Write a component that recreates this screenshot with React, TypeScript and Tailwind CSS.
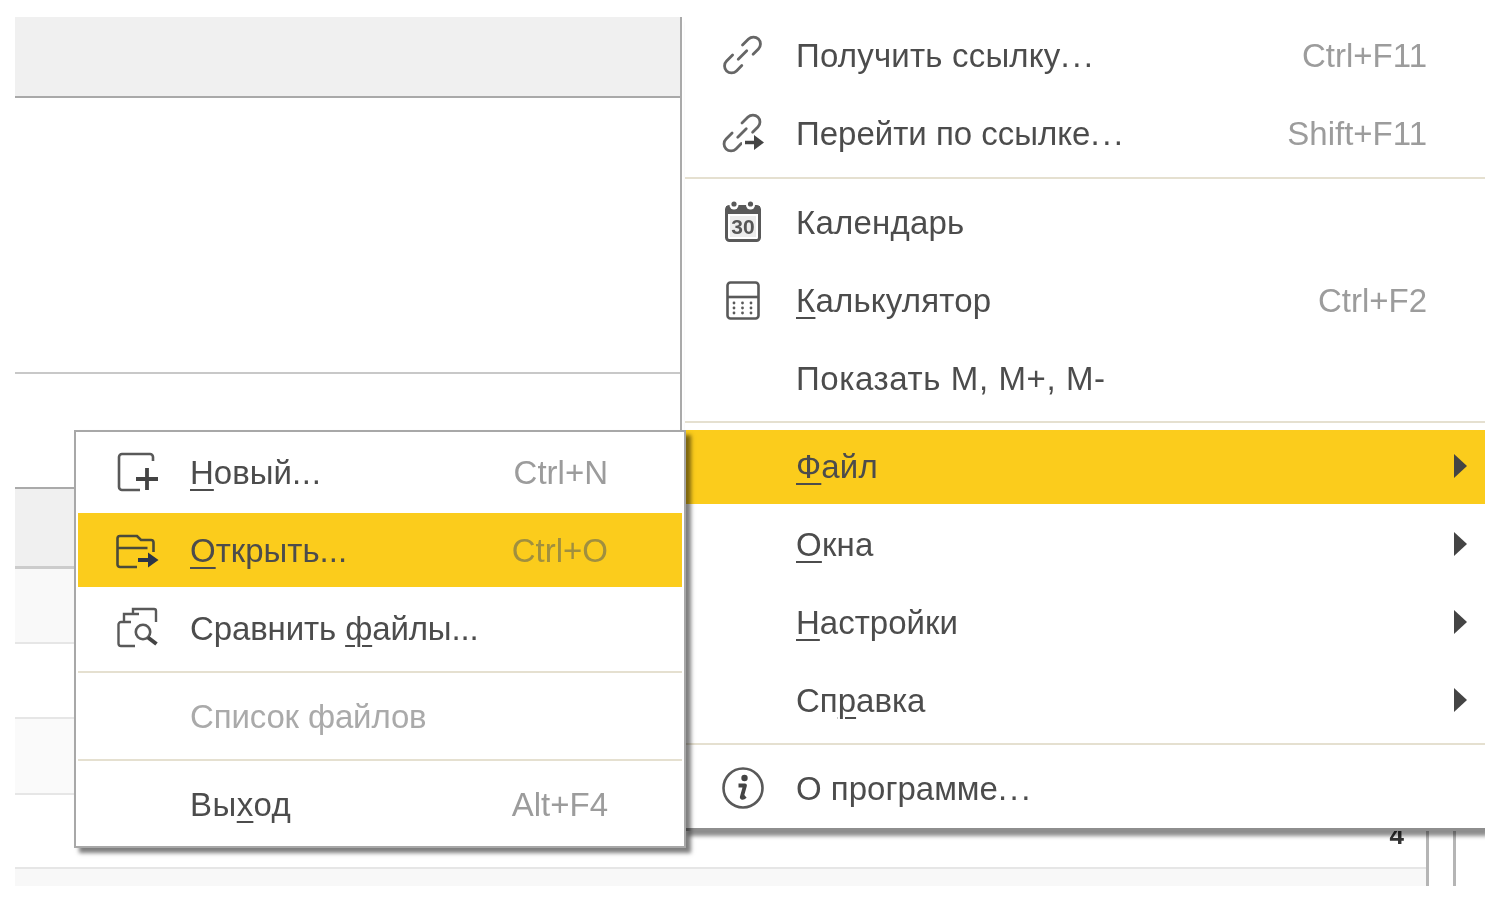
import React from 'react';

const iconClass = 'w-[44px] h-[44px] shrink-0 text-[#595959]';

function LinkGlyph() {
  return (
    <g transform="rotate(-45 20 23)" fill="none" stroke="#666666" strokeWidth="2.8" strokeLinecap="round">
      <path d="M13 16H4.500a7 7 0 0 0 0 14H12" />
      <path d="M27 16h8.500a7 7 0 0 1 0 14H28" />
      <path d="M14 23h12" />
    </g>
  );
}

const LinkIcon = () => (
  <svg viewBox="0 0 44 44" className={iconClass}>
    <g transform="translate(1.500 -1)">
      <LinkGlyph />
    </g>
  </svg>
);

const FollowLinkIcon = () => (
  <svg viewBox="0 0 44 44" className={iconClass}>
    <g transform="translate(1 -1)">
      <LinkGlyph />
    </g>
    <rect x="21" y="26" width="22" height="18" fill="#fff" />
    <path d="M24 31.500h11" stroke="#444" strokeWidth="3.500" fill="none" />
    <path d="M33 24l10 7.500-10 7.500z" fill="#444" />
  </svg>
);

const CalendarIcon = () => (
  <svg viewBox="0 0 44 44" className={iconClass}>
    <rect x="5.500" y="6.500" width="33" height="34" rx="3" fill="none" stroke="currentColor" strokeWidth="3" />
    <rect x="5" y="6" width="34" height="8" fill="currentColor" />
    <circle cx="13" cy="5" r="4.500" fill="#fff" />
    <circle cx="29.500" cy="5" r="4.500" fill="#fff" />
    <circle cx="13" cy="4" r="2.600" fill="currentColor" />
    <circle cx="29.500" cy="4" r="2.600" fill="currentColor" />
    <rect x="9" y="16" width="26" height="21" fill="#ececec" />
    <text x="22" y="34" textAnchor="middle" fontFamily="'Liberation Sans', sans-serif" fontWeight="700" fontSize="21" fill="#555">
      30
    </text>
  </svg>
);

const CalculatorIcon = () => (
  <svg viewBox="0 0 44 44" className={iconClass}>
    <rect x="6.500" y="4.500" width="31" height="36" rx="3" fill="none" stroke="currentColor" strokeWidth="2.600" />
    <path d="M6.500 19h31" stroke="currentColor" strokeWidth="2.600" />
    {[13, 21.5, 30].flatMap((x) =>
      [25, 30, 35].map((y) => <circle key={`${x}-${y}`} cx={x} cy={y} r="1.400" fill="currentColor" />)
    )}
  </svg>
);

const InfoIcon = () => (
  <svg viewBox="0 0 44 44" className={iconClass}>
    <circle cx="22" cy="22" r="19.500" fill="none" stroke="currentColor" strokeWidth="2.600" />
    <circle cx="23.500" cy="12" r="3.200" fill="#444" />
    <path d="M17.500 19.500h6.500l-3.200 11.500c-.3 1.200 1 1.400 3.600-.8" fill="none" stroke="#444" strokeWidth="3.800" strokeLinejoin="round" />
  </svg>
);

const NewIcon = () => (
  <svg viewBox="0 0 44 44" className={iconClass}>
    <path d="M24 40H6a3 3 0 0 1-3-3V7a3 3 0 0 1 3-3h28a3 3 0 0 1 3 3v4" fill="none" stroke="currentColor" strokeWidth="2.600" />
    <path d="M31 18v22M20 29h22" stroke="#444" strokeWidth="3.800" fill="none" />
  </svg>
);

const OpenIcon = () => (
  <svg viewBox="0 0 44 44" className={iconClass}>
    <path
      d="M21 39H4a2.500 2.500 0 0 1-2.500-2.500V10.500A2.500 2.500 0 0 1 4 8h17l4 4h10a2.500 2.500 0 0 1 2.500 2.500V24M1.500 20h30"
      fill="none"
      stroke="#4a4a3a"
      strokeWidth="2.600"
    />
    <path d="M22 32h12" stroke="#2c3548" strokeWidth="4" fill="none" />
    <path d="M32 24.500l10.500 7.500-10.500 7.500z" fill="#2c3548" />
  </svg>
);

const CompareIcon = () => (
  <svg viewBox="0 0 44 44" className={iconClass}>
    <path
      d="M19 40H5a2.500 2.500 0 0 1-2.500-2.500V18.500A2.500 2.500 0 0 1 5 16h3V8h9V3h21a2 2 0 0 1 2 2v11M17 8h6M8 16h7"
      fill="none"
      stroke="currentColor"
      strokeWidth="2.400"
    />
    <circle cx="27" cy="26" r="7.200" fill="#fff" stroke="currentColor" strokeWidth="2.600" />
    <path d="M32 31.500l8.500 6.500" stroke="#444" strokeWidth="4" />
  </svg>
);

interface MenuRowProps {
  icon?: React.ReactNode;
  shortcut?: string;
  hasArrow?: boolean;
  active?: boolean;
  disabled?: boolean;
  wide?: boolean;
  children: React.ReactNode;
}

const Key = ({ children }: { children: React.ReactNode }) => (
  <span className="underline decoration-[2px] underline-offset-[5px]">{children}</span>
);

// the dots are spaced wider than the font sets them
const Dots = () => <span className="tracking-[2.500px]">...</span>;

const MenuRow: React.FC<MenuRowProps> = ({ icon, shortcut, hasArrow, active, disabled, wide, children }) => (
  <div className={`h-[78px] ${active && wide ? 'pt-[3px] pb-[1px]' : 'py-[2px]'}`}>
    <div
      className={`h-[74px] flex items-center ${active ? 'bg-[#fbcc1c]' : ''} ${active && wide ? 'pb-[2px]' : ''} ${wide ? 'pl-[36px]' : 'pl-[38px]'}`}
    >
      <div className={`shrink-0 ${wide ? 'w-[75px]' : 'w-[74px]'}`}>{icon}</div>
      <div className={`flex-1 whitespace-nowrap ${disabled ? 'text-[#aaaaaa]' : 'text-[#4c4c4c]'}`}>
        {children}
      </div>
      {shortcut && (
        <div className={`whitespace-nowrap ${active ? 'text-[#a08f3f]' : 'text-[#9c9c9c]'}`}>{shortcut}</div>
      )}
      {wide && (
        <div className="w-[58px] shrink-0 flex justify-end pr-[18px]">
          {hasArrow && <div className="w-0 h-0 border-y-[12px] border-y-transparent border-l-[13px] border-l-[#444444]" />}
        </div>
      )}
      {!wide && <div className="w-[74px] shrink-0" />}
    </div>
  </div>
);

const Separator = () => <div className="h-[2px] my-[4px] bg-[#e5e0d0]" />;

const RightMenu = () => (
  <div className="absolute left-[670px] top-0 w-[800px] bg-white border-b-[3px] border-[#8e8e8e] shadow-[3px_5px_4px_rgba(0,0,0,0.45)] pb-[1px]">
    <div className="-mt-[1px] mb-[5px]">
      <MenuRow wide icon={<LinkIcon />} shortcut="Ctrl+F11"><span className="tracking-[0.2px]">Получить ссылку</span><Dots /></MenuRow>
      <MenuRow wide icon={<FollowLinkIcon />} shortcut="Shift+F11">Перейти по ссылке<Dots /></MenuRow>
    </div>
    <Separator />
    <MenuRow wide icon={<CalendarIcon />}><span className="tracking-[0.2px]">Кален<Key>д</Key>арь</span></MenuRow>
    <MenuRow wide icon={<CalculatorIcon />} shortcut="Ctrl+F2"><span className="tracking-[0.2px]"><Key>К</Key>алькулятор</span></MenuRow>
    <MenuRow wide><span className="tracking-[0.6px]">Показать М, М+, М-</span></MenuRow>
    <Separator />
    <MenuRow wide active hasArrow><span className="tracking-[0.2px]"><Key>Ф</Key>айл</span></MenuRow>
    <MenuRow wide hasArrow><span className="tracking-[0.2px]"><Key>О</Key>кна</span></MenuRow>
    <MenuRow wide hasArrow><Key>Н</Key>астройки</MenuRow>
    <MenuRow wide hasArrow>Сп<Key>р</Key>авка</MenuRow>
    <Separator />
    <MenuRow wide icon={<InfoIcon />}>О программе<Dots /></MenuRow>
  </div>
);

const LeftMenu = () => (
  <div className="absolute left-[59px] top-[413px] w-[612px] bg-white border-2 border-[#a8a8a8] px-[2px] pt-[1px] pb-[3px] shadow-[5px_5px_4px_rgba(0,0,0,0.5)]">
    <MenuRow icon={<NewIcon />} shortcut="Ctrl+N"><Key>Н</Key>овый<span className="tracking-[0.700px]">...</span></MenuRow>
    <MenuRow active icon={<OpenIcon />} shortcut="Ctrl+O"><Key>О</Key>ткрыть...</MenuRow>
    <MenuRow icon={<CompareIcon />}><span className="tracking-[-0.120px]">Сравнить <Key>ф</Key>айлы...</span></MenuRow>
    <Separator />
    <MenuRow disabled><span className="tracking-[-0.150px]">Список файлов</span></MenuRow>
    <Separator />
    <MenuRow shortcut="Alt+F4"><span className="tracking-[0.5px]">Вы<Key>х</Key>од</span></MenuRow>
  </div>
);

export default function App() {
  return (
    <div className="w-[1500px] h-[904px] bg-white overflow-hidden pt-[17px] pl-[15px] font-['Liberation_Sans',Arial,sans-serif] text-[33px] leading-none">
      <div className="relative w-[1470px] h-[869px] overflow-hidden blur-[0.6px]">
        {/* table behind the menus */}
        <div className="w-[667px] border-r-[2px] border-[#aaaaaa] h-[420px]">
          <div className="h-[81px] bg-[#f0f0f0] border-b-[2px] border-[#a9a9a9]" />
          <div className="h-[276px] border-b-[2px] border-[#c8c8c8]" />
        </div>
        <div className="w-[665px] h-[52px] border-b-[2px] border-[#aaaaaa]" />
        <div className="flex h-[397px]">
          <div className="w-[1411px] flex flex-col">
            <div className="h-[80px] bg-[#f0f0f0] border-b-[3px] border-[#cccccc]" />
            <div className="h-[75px] bg-[#f9f9f9] border-b-[2px] border-[#e6e6e6]" />
            <div className="h-[75px] border-b-[2px] border-[#e6e6e6]" />
            <div className="h-[76px] bg-[#fafafa] border-b-[2px] border-[#e6e6e6]" />
            <div className="h-[74px] border-b-[2px] border-[#e6e6e6] flex items-center justify-end pr-[22px] pt-[8px] text-[26px] font-bold text-[#333333]">
              4
            </div>
            <div className="flex-1 bg-[#f8f8f8]" />
          </div>
          <div className="w-[30px] h-full border-x-[3px] border-x-[#b5b5b5]" />
        </div>
        <RightMenu />
        <LeftMenu />
      </div>
    </div>
  );
}
